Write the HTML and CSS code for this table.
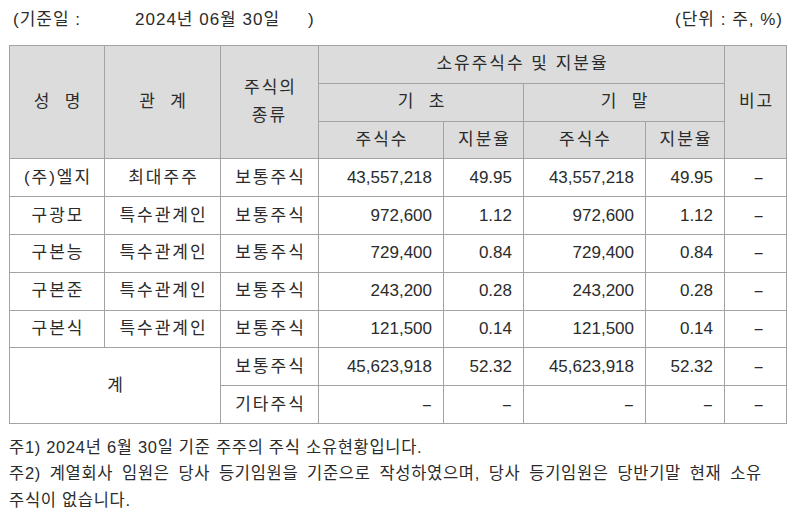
FILE: index.html
```html
<!DOCTYPE html>
<html lang="ko">
<head>
<meta charset="utf-8">
<title>최대주주 및 특수관계인의 주식소유 현황</title>
<link rel="stylesheet" href="styles.css">
</head>
<body>
<div class="page">
  <div class="meta">
    <div class="basis"><span class="basis-label">(기준일 :</span><span class="basis-date">2024년 06월 30일</span><span class="basis-close">)</span></div>
    <div class="unit">(단위 : 주, %)</div>
  </div>
  <table class="holdings">
    <colgroup>
      <col class="c-name"><col class="c-rel"><col class="c-kind"><col class="c-qty1"><col class="c-pct1"><col class="c-qty2"><col class="c-pct2"><col class="c-note">
    </colgroup>
    <thead>
      <tr>
        <th rowspan="3">성&nbsp;&nbsp;명</th>
        <th rowspan="3">관&nbsp;&nbsp;계</th>
        <th rowspan="3" class="two-line">주식의<br>종류</th>
        <th colspan="4">소유주식수 및 지분율</th>
        <th rowspan="3" class="note-head">비고</th>
      </tr>
      <tr>
        <th colspan="2">기&nbsp;&nbsp;초</th>
        <th colspan="2">기&nbsp;&nbsp;말</th>
      </tr>
      <tr>
        <th>주식수</th>
        <th>지분율</th>
        <th>주식수</th>
        <th>지분율</th>
      </tr>
    </thead>
    <tbody>
      <tr>
        <td class="ctr">(주)엘지</td><td class="ctr">최대주주</td><td class="ctr">보통주식</td>
        <td class="num">43,557,218</td><td class="num">49.95</td><td class="num">43,557,218</td><td class="num">49.95</td><td class="ctr"><span class="dash">-</span></td>
      </tr>
      <tr>
        <td class="ctr">구광모</td><td class="ctr">특수관계인</td><td class="ctr">보통주식</td>
        <td class="num">972,600</td><td class="num">1.12</td><td class="num">972,600</td><td class="num">1.12</td><td class="ctr"><span class="dash">-</span></td>
      </tr>
      <tr>
        <td class="ctr">구본능</td><td class="ctr">특수관계인</td><td class="ctr">보통주식</td>
        <td class="num">729,400</td><td class="num">0.84</td><td class="num">729,400</td><td class="num">0.84</td><td class="ctr"><span class="dash">-</span></td>
      </tr>
      <tr>
        <td class="ctr">구본준</td><td class="ctr">특수관계인</td><td class="ctr">보통주식</td>
        <td class="num">243,200</td><td class="num">0.28</td><td class="num">243,200</td><td class="num">0.28</td><td class="ctr"><span class="dash">-</span></td>
      </tr>
      <tr>
        <td class="ctr">구본식</td><td class="ctr">특수관계인</td><td class="ctr">보통주식</td>
        <td class="num">121,500</td><td class="num">0.14</td><td class="num">121,500</td><td class="num">0.14</td><td class="ctr"><span class="dash">-</span></td>
      </tr>
      <tr>
        <td class="ctr" rowspan="2" colspan="2">계</td><td class="ctr">보통주식</td>
        <td class="num">45,623,918</td><td class="num">52.32</td><td class="num">45,623,918</td><td class="num">52.32</td><td class="ctr"><span class="dash">-</span></td>
      </tr>
      <tr>
        <td class="ctr">기타주식</td>
        <td class="num"><span class="dash">-</span></td><td class="num"><span class="dash">-</span></td><td class="num"><span class="dash">-</span></td><td class="num"><span class="dash">-</span></td><td class="ctr"><span class="dash">-</span></td>
      </tr>
    </tbody>
  </table>
  <div class="notes">
    <p>주1) 2024년 6월 30일 기준 주주의 주식 소유현황입니다.</p>
    <p>주2) 계열회사 임원은 당사 등기임원을 기준으로 작성하였으며, 당사 등기임원은 당반기말 현재 소유 주식이 없습니다.</p>
  </div>
</div>
</body>
</html>
```

FILE: styles.css
```css
html, body {
  margin: 0;
  padding: 0;
  background: #ffffff;
}

body {
  font-family: "Liberation Sans", "Noto Sans CJK KR", sans-serif;
  color: #2b2b2b;
}

.page {
  padding: 8px 0 0 9px;
  width: 777px;
}

.meta {
  display: flex;
  justify-content: space-between;
  align-items: center;
  font-size: 17px;
  line-height: 24px;
  height: 24px;
  margin-bottom: 13px;
  padding-left: 4px;
  padding-right: 3px;
  letter-spacing: 1px;
}

.basis {
  display: flex;
}

.basis-label {
  margin-right: 54px;
}

.basis-date {
  margin-right: 28px;
}

.holdings {
  border-collapse: collapse;
  table-layout: fixed;
  width: 777px;
  border: 1px solid #2a2a2a;
  font-size: 17px;
}

.c-name { width: 95px; }
.c-rel { width: 116px; }
.c-kind { width: 98px; }
.c-qty1 { width: 125px; }
.c-pct1 { width: 80px; }
.c-qty2 { width: 122px; }
.c-pct2 { width: 79px; }
.c-note { width: 62px; }

.holdings tr {
  height: 37.8px;
}

.holdings th,
.holdings td {
  border: 1px solid #a3a3a3;
  padding: 0 11px;
  line-height: 20px;
  white-space: nowrap;
}

.holdings th {
  background: #dcdcdc;
  font-weight: normal;
  text-align: center;
  letter-spacing: 2px;
  text-indent: 2px;
}

.holdings th.two-line {
  line-height: 28px;
}

.holdings th.note-head {
  padding: 0;
}

.holdings td.ctr {
  text-align: center;
  letter-spacing: 2px;
  text-indent: 2px;
}

.holdings td.num {
  text-align: right;
}

.dash {
  display: inline-block;
  transform: scaleX(1.9);
  letter-spacing: 0;
}

.holdings td.num .dash {
  margin-right: 2px;
}

.notes {
  margin-top: 10px;
  width: 753px;
  font-size: 16.5px;
  line-height: 26.5px;
  text-align: justify;
  letter-spacing: 0.7px;
  word-break: keep-all;
}

.notes p {
  margin: 0;
}
```
